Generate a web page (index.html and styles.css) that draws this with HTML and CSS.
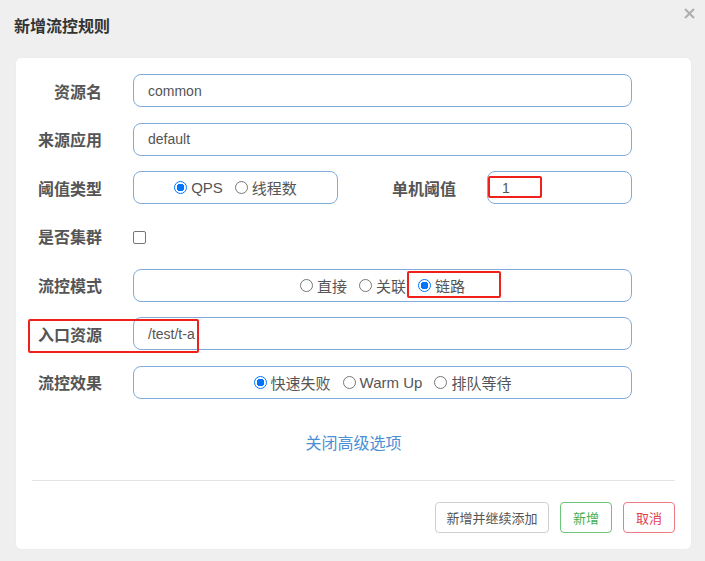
FILE: index.html
```html
<!DOCTYPE html>
<html lang="zh">
<head>
<meta charset="utf-8">
<link rel="stylesheet" href="styles.css">
</head>
<body>
<div class="dialog">
  <div class="header">
    <h3 class="title">新增流控规则</h3>
    <svg class="close" width="11" height="11" viewBox="0 0 11 11"><path d="M1 1L10 10M10 1L1 10" stroke="#b0b0b0" stroke-width="2.2" fill="none"/></svg>
  </div>
  <div class="card">
    <div class="form">
      <div class="row">
        <label class="label">资源名</label>
        <div class="field input">common</div>
      </div>
      <div class="row">
        <label class="label">来源应用</label>
        <div class="field input">default</div>
      </div>
      <div class="row">
        <label class="label">阈值类型</label>
        <div class="field radios narrow">
          <span class="opt"><span class="radio on"></span>QPS</span>
          <span class="opt"><span class="radio"></span>线程数</span>
        </div>
        <label class="label wide">单机阈值</label>
        <div class="field input hl-wrap">1<span class="hl hl-one"></span></div>
      </div>
      <div class="row">
        <label class="label">是否集群</label>
        <span class="checkbox"></span>
      </div>
      <div class="row">
        <label class="label">流控模式</label>
        <div class="field radios">
          <span class="opt"><span class="radio"></span>直接</span>
          <span class="opt"><span class="radio"></span>关联</span>
          <span class="opt hl-wrap"><span class="radio on"></span>链路<span class="hl hl-chain"></span></span>
        </div>
      </div>
      <div class="row hl-wrap">
        <label class="label">入口资源</label>
        <div class="field input">/test/t-a</div>
        <span class="hl hl-entry"></span>
      </div>
      <div class="row">
        <label class="label">流控效果</label>
        <div class="field radios">
          <span class="opt"><span class="radio on"></span>快速失败</span>
          <span class="opt"><span class="radio"></span>Warm Up</span>
          <span class="opt"><span class="radio"></span>排队等待</span>
        </div>
      </div>
    </div>
    <div class="more"><a class="link">关闭高级选项</a></div>
    <div class="footer">
      <button class="btn wide-btn">新增并继续添加</button>
      <button class="btn ok">新增</button>
      <button class="btn cancel">取消</button>
    </div>
  </div>
</div>
</body>
</html>
```
FILE: styles.css
```css
* { box-sizing: border-box; }
body {
  margin: 0;
  background: #efefef;
  font-family: "Liberation Sans", "Noto Sans CJK SC", sans-serif;
  color: #555;
}
.dialog { width: 705px; height: 561px; position: relative; }
.header { height: 58px; padding: 15px 0 0 14px; }
.title {
  margin: 0;
  font-size: 16px;
  font-weight: bold;
  color: #333;
  line-height: 20px;
  font-family: "Noto Sans CJK SC", sans-serif;
}
.close { position: absolute; left: 684px; top: 8px; }
.card {
  margin: 0 14px 0 16px;
  height: 491px;
  background: #fff;
  border-radius: 5px;
  box-shadow: 0 0 1px rgba(0,0,0,0.08);
  padding: 16px;
}
.form {
  display: flex;
  flex-direction: column;
  gap: 15.67px;
  padding-right: 43px;
}
.row {
  display: flex;
  align-items: center;
  height: 33px;
  gap: 31px;
}
.label {
  width: 70px;
  flex: none;
  text-align: right;
  font-size: 16px;
  font-weight: bold;
  color: #555;
  font-family: "Noto Sans CJK SC", sans-serif;
}
.label.wide { width: 87px; }
.field {
  flex: 1;
  height: 33px;
  border: 1px solid #80abdb;
  border-radius: 8px;
  font-size: 14px;
  color: #555;
  display: flex;
  align-items: center;
}
.input { padding-left: 14px; }
.radios { justify-content: center; gap: 12px; }
.narrow { flex: none; width: 205px; }
.opt {
  display: inline-flex;
  align-items: center;
  font-size: 15px;
  color: #555;
}
.radio {
  width: 13px;
  height: 13px;
  border: 1px solid #767676;
  border-radius: 50%;
  margin-right: 4px;
  flex: none;
}
.radio.on {
  border: 1.5px solid #0075ff;
  background: radial-gradient(circle, #0075ff 0 3.6px, #fff 4px);
}
.checkbox {
  width: 13px;
  height: 13px;
  border: 1px solid #767676;
  border-radius: 2px;
  margin-top: 3px;
}
.hl-wrap { position: relative; }
.hl {
  position: absolute;
  border: 2.5px solid #f0201a;
  border-radius: 2px;
}
.hl-one { left: 0; top: 4px; width: 54px; height: 22px; }
.hl-chain { left: -11px; top: -4px; width: 94px; height: 27px; }
.hl-entry { left: -4px; top: 2px; width: 171px; height: 34px; }
.more {
  margin-top: 33px;
  text-align: center;
  height: 20px;
  line-height: 20px;
}
.link {
  color: #4a8fd6;
  font-size: 16px;
  font-family: "Noto Sans CJK SC", sans-serif;
}
.footer {
  margin-top: 28px;
  border-top: 1px solid #e3e3e3;
  padding-top: 21px;
  display: flex;
  justify-content: flex-end;
  gap: 11px;
}
.btn {
  height: 31px;
  padding: 0;
  background: #fff;
  border: 1px solid #cfcfcf;
  border-radius: 4px;
  font-size: 13px;
  color: #555;
  font-family: "Noto Sans CJK SC", sans-serif;
}
.btn.wide-btn { width: 114px; }
.btn.ok { border-color: #6cc47a; color: #3fae52; width: 52px; }
.btn.cancel { border-color: #ee7a82; color: #e04050; width: 52px; }
```
